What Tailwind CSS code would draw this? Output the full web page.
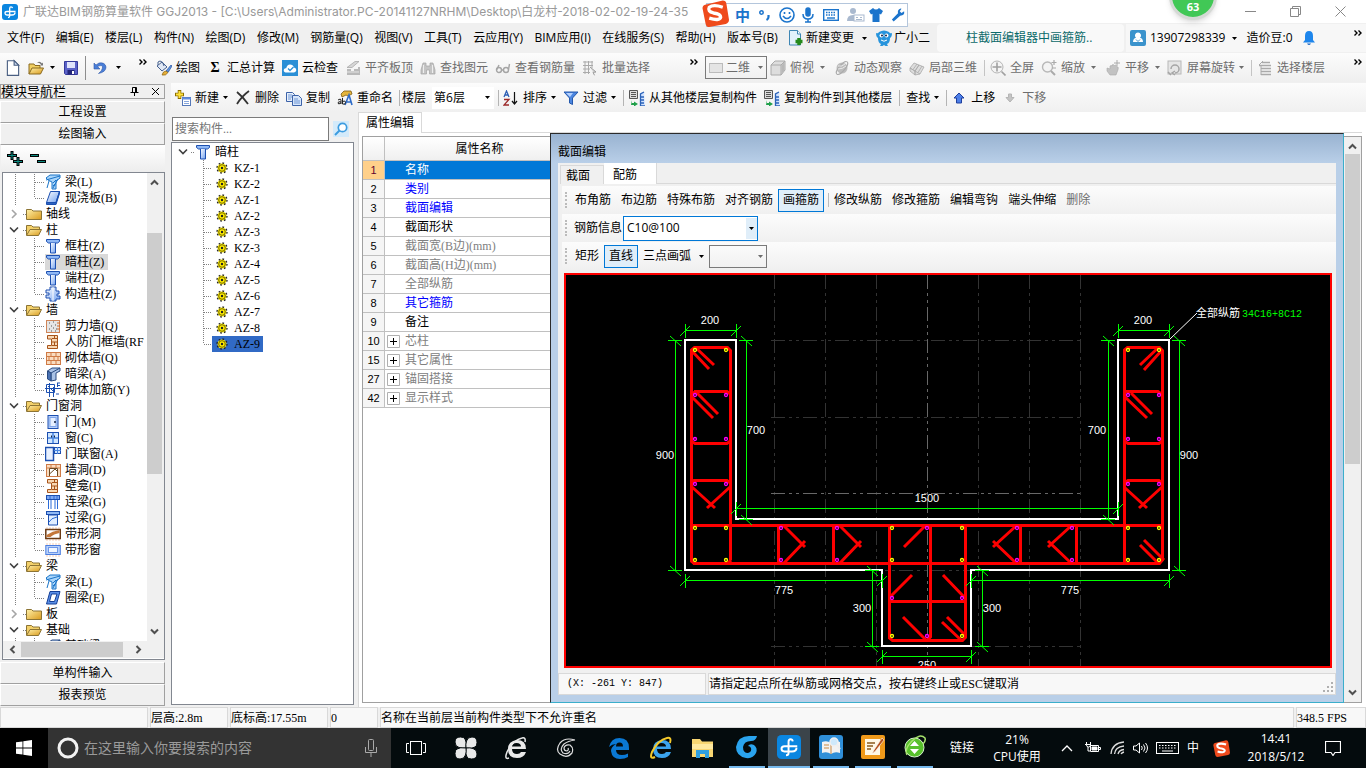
<!DOCTYPE html>
<html lang="zh-CN">
<head>
  <meta charset="UTF-8">
  <meta name="viewport" content="width=device-width, initial-scale=1.0">
  <title>广联达BIM钢筋算量软件 GGJ2013</title>
  <script src="https://cdn.jsdelivr.net/npm/@tailwindcss/browser@4"></script>
</head>
<body class="h-screen flex flex-col overflow-hidden bg-[#f0f0f0] text-black text-xs whitespace-nowrap font-['Open_Sans','Noto_Sans_CJK_SC',sans-serif]">

  <!-- icon sprite -->
  <svg width="0" height="0" class="absolute">
    <defs>
      <linearGradient id="gFolder" x1="0" y1="0" x2="1" y2="1"><stop offset="0" stop-color="#fff0a8"/><stop offset="1" stop-color="#d99a1c"/></linearGradient>
      <linearGradient id="gBlue" x1="0" y1="0" x2="1" y2="1"><stop offset="0" stop-color="#fff"/><stop offset="1" stop-color="#6fa0f0"/></linearGradient>
    </defs>
    <symbol id="caret" viewBox="0 0 7 4"><path d="M0 0h7L3.500 4z" fill="currentColor"/></symbol>
    <symbol id="more" viewBox="0 0 8 6"><path d="M.5.5L3 3 .5 5.500M4.500.5L7 3 4.500 5.500" fill="none" stroke="#000" stroke-width="1.400"/></symbol>
    <symbol id="logo" viewBox="0 0 16 16"><rect width="16" height="16" rx="3" fill="#0a86e0"/><path d="M10.500 4.200Q10.300 2.800 9 2.800T7.700 4.500V12q0 1.500-1.700 1.500M13.500 7.500H5Q3 7.500 3 9.200T5 11h5q3 0 3-2.500" fill="none" stroke="#fff" stroke-width="1.300"/></symbol>
    <symbol id="new" viewBox="0 0 16 16"><path d="M3 1.500h6l4 4v9H3z" fill="#fff" stroke="#4a5f82"/><path d="M9 1.500v4h4z" fill="#c9d8ee" stroke="#4a5f82"/></symbol>
    <symbol id="open" viewBox="0 0 16 16"><path d="M1 14V4h5l1 1.500h5V8" fill="#f0cf62" stroke="#8a6a20"/><path d="M1 14L4 8h11.500l-3 6z" fill="url(#gFolder)" stroke="#8a6a20"/><path d="M9 2.500q3-2 5 1l1-1v3h-3l1-1q-1.500-2-4-2" fill="#777"/></symbol>
    <symbol id="save" viewBox="0 0 16 16"><path d="M1.500 1.500h13v13h-12l-1-1z" fill="#5b62c8" stroke="#34399a"/><path d="M4 2h8v6H4z" fill="#dfe3fb"/><path d="M4.500 10h7v4.500h-7z" fill="#24277a"/><path d="M9 11h2v3H9z" fill="#fff"/></symbol>
    <symbol id="undo" viewBox="0 0 16 16"><path d="M2 3v6h6L5.500 6.500Q11 4 10.500 8 10 11 6.500 13.500 14 12 14 7 13 2 7 3L4 5z" fill="#4a7fd8" stroke="#2f58a8" stroke-width=".6"/></symbol>
    <symbol id="paint" viewBox="0 0 16 16"><path d="M1 6l5-4 5 5-5 4z" fill="#dfe7f4" stroke="#45608f"/><path d="M2 5Q1 1 4 1t4 5" fill="none" stroke="#45608f"/><path d="M15 5l-5 6 2 1.500 4-6.500z" fill="#5f94df" stroke="#234f9e" stroke-width=".7"/><path d="M10 11q-3 0-4 4 4 1 6-2.500z" fill="#e8b13a" stroke="#7b5713" stroke-width=".6"/></symbol>
    <symbol id="cloud" viewBox="0 0 16 16"><rect width="16" height="16" fill="#2a8fd6"/><path d="M3.500 12.500q-2.500-1-1.500-3.200 1-1.500 2.200-1Q5 4.500 8 4.500T12 7.500q2.500.5 2.300 2.800-.3 2-2.300 2.200z" fill="#fff"/><path d="M6 8.500l2 2 3.500-3.500" fill="none" stroke="#2a8fd6" stroke-width="1.300"/></symbol>
    <symbol id="align" viewBox="0 0 16 16"><path d="M2 7.500L10 1.500h4L7 7.500z" fill="#d6d6d6" stroke="#aaa" stroke-width=".8"/><path d="M2 9h4v2h3V9h4V7h2v8H2z" fill="#b9b9b9"/><path d="M2 12h12" stroke="#e6e6e6"/></symbol>
    <symbol id="binoc" viewBox="0 0 16 16"><path d="M3 3h3v3h4V3h3l2 7v4H9.500v-4h-3v4H1v-4z" fill="#c4c4c4" stroke="#a5a5a5" stroke-width=".7"/><path d="M3.500 5v8M12.500 5v8" stroke="#eee"/></symbol>
    <symbol id="glass" viewBox="0 0 16 16"><g fill="none" stroke="#a5a5a5" stroke-width="1.400"><circle cx="4" cy="10" r="2.500"/><circle cx="11" cy="10" r="2.500"/><path d="M1.500 10L4 5M6.500 10h2M13.500 9.500L14.500 4"/></g></symbol>
    <symbol id="batch" viewBox="0 0 16 16"><path d="M1 2h10M1 5.500h10M1 9h7M1 12.500h7M3 1v13M6.500 1v13M10 1v7" stroke="#aaa" fill="none"/><path d="M8 7l6 5-3 .3 1.500 3" fill="#ddd" stroke="#999"/></symbol>
    <symbol id="cube" viewBox="0 0 16 16"><path d="M1 5l4-4h10v9l-4 5H1z" fill="#ddd" stroke="#aaa"/><path d="M1 5h10v10M11 5l4-4" fill="none" stroke="#aaa"/><path d="M11.500 5.500l3-4v8.500l-3 4z" fill="#b8b8b8"/></symbol>
    <symbol id="orbit" viewBox="0 0 16 16"><circle cx="8" cy="8" r="5.500" fill="#bdbdbd"/><ellipse cx="8" cy="8" rx="8" ry="3" fill="none" stroke="#aaa" transform="rotate(-50 8 8)"/><path d="M4 6q4 1 7-2M4 9q5 0 8-3" stroke="#e8e8e8" fill="none"/></symbol>
    <symbol id="part3d" viewBox="0 0 16 16"><g fill="#ddd" stroke="#aaa" stroke-width=".8"><path d="M1 8l4-5 5 2-4 6zM6 11l4-6 5 2-4 7zM1 8v3l5 4v-4zM6 11v4l5-1M8 4L4 9.500M13 6l-4 6.500"/></g></symbol>
    <symbol id="full" viewBox="0 0 16 16"><circle cx="7" cy="7" r="6" fill="#f4f4f4" stroke="#b5b5b5"/><path d="M7 2.500v9M2.500 7h9M11.500 11.500l4 4" stroke="#a0a0a0" stroke-width="1.600"/></symbol>
    <symbol id="zoom" viewBox="0 0 16 16"><circle cx="6.500" cy="7" r="5" fill="#f4f4f4" stroke="#b8b8b8" stroke-width="1.400"/><path d="M10 11l4 4" stroke="#aaa" stroke-width="2"/><path d="M13 0v5M10.500 2.500h5M11 8h4" stroke="#aaa" stroke-width="1.200"/></symbol>
    <symbol id="hand" viewBox="0 0 16 16"><path d="M2 8l3 1V6q1-1 2 0V5q1-1 2 0l.5.5q1-1 2 .2l.5 1q2 0 1 3L11 15H5L2 11z" fill="#c2c2c2" stroke="#a8a8a8" stroke-width=".6"/><path d="M12 0v6M9 3h6" stroke="#aaa"/></symbol>
    <symbol id="rotate" viewBox="0 0 16 16"><rect x="1" y="1" width="13" height="13" fill="#e6e6e6" stroke="#b8b8b8"/><path d="M4 9a4 4 0 1 1 4 4M8 15l-3-2 3-2M1 12l3 3" fill="none" stroke="#a5a5a5" stroke-width="1.500"/></symbol>
    <symbol id="floors" viewBox="0 0 16 16"><path d="M5 2.500h8M2 5.500h12M4 8.500h10M4 11.500h10M4 14.500h10" stroke="#aaa" stroke-width="1.500"/><path d="M2 5l4-4M4 5v10" stroke="#aaa"/></symbol>
    <symbol id="add" viewBox="0 0 16 16"><path d="M4.500 0v9M0 4.500h9" stroke="#8a6d00" stroke-width="3.500"/><path d="M4.500 1v7M1 4.500h7" stroke="#ffe23c" stroke-width="2"/><rect x="7.500" y="7.500" width="8" height="8" fill="#fff" stroke="#5578b8"/><path d="M7 8.500h9" stroke="#5f8be0" stroke-width="2"/><path d="M9 11.500h5M9 13.500h5" stroke="#86a6dc"/></symbol>
    <symbol id="del" viewBox="0 0 16 16"><path d="M2 2q6 5 11 12M14 1Q7 6 2 14" fill="none" stroke="#333" stroke-width="1.800"/></symbol>
    <symbol id="copy" viewBox="0 0 16 16"><path d="M.5 2.500h6l2 2v7h-8z" fill="#e6effc" stroke="#3c62a8"/><path d="M6.500 5.500h6l3 3v7h-9z" fill="#d7e6fb" stroke="#3c62a8"/><path d="M2 5h4M2 7h4M2 9h3M8 9h4M8 11h6M8 13h6" stroke="#6f96d4"/></symbol>
    <symbol id="rename" viewBox="0 0 16 16"><path d="M4 4l3-3h7l1 3-4 2-2-1-4 2z" fill="#e4b53c" stroke="#7c5a12" stroke-width=".8"/><path d="M8 15l4-10 3 10M9.500 12h4.500" stroke="#2f6cc8" stroke-width="1.600" fill="none"/><path d="M1 10q3-2 3 0v4M4 12q-3-1-3 1t3 0M5.500 8v6q3 1 3-1.500t-3-1" fill="none" stroke="#222"/></symbol>
    <symbol id="sort" viewBox="0 0 16 16"><path d="M1 7l2.500-6L6 7M2 5h3" stroke="#2d5fb5" stroke-width="1.300" fill="none"/><path d="M1 9.500h5l-5 5.500h5" stroke="#9c2a2a" stroke-width="1.300" fill="none"/><path d="M11.500 2v12M9 11l2.500 3 2.500-3" stroke="#111" stroke-width="1.200" fill="none"/></symbol>
    <symbol id="filter" viewBox="0 0 16 16"><path d="M1 2h14L9.500 8v6.500L6.500 13V8z" fill="#4c86e0" stroke="#2458ac"/><path d="M3 3h7L7 7z" fill="#b5d2ff"/></symbol>
    <symbol id="flcopy" viewBox="0 0 16 16"><path d="M.5.500h8v8h-8z" fill="#ddd" stroke="#555"/><path d="M2 2.500h5M2 4.500h5M2 6.500h5" stroke="#555"/><path d="M15 2l-3.500 2v12H16M11.500 7H15M11.500 10H15M11.500 13H15" fill="#cfe2ff" stroke="#2b62b8" stroke-width="1.300"/><path d="M3 10v3h2v-1.500l4 2.500-4 2.500V15H2z" fill="#1fa04a"/></symbol>
    <symbol id="up" viewBox="0 0 16 16"><path d="M8 3l5 5h-2.500v5h-5V8H3z" fill="#4d7fe8" stroke="#1f3f9c"/></symbol>
    <symbol id="down" viewBox="0 0 16 16"><path d="M8 12l4-4.500H9.500V4h-3v3.500H4z" fill="#c4c4c4" stroke="#b5b5b5"/></symbol>
    <symbol id="change" viewBox="0 0 16 16"><path d="M1.500.5h8l3 3.500v11h-11z" fill="#e3f2fb" stroke="#3f86b4"/><path d="M9.500.5V4h3" fill="#fff" stroke="#3f86b4"/><path d="M11 8v7M7.500 11.500h7" stroke="#258a1c" stroke-width="3.500"/></symbol>
    <symbol id="owl" viewBox="0 0 16 16"><path d="M0 3q2 1 3-1 5-3 10 0 1 2 3 1 0 4-2 5 0 5-3 6l1 2H9.500L8 15l-1.500 1H4l1-2q-3-1-3-6Q0 7 0 3z" fill="#2794dc"/><circle cx="5.500" cy="5.500" r="2" fill="#fff"/><circle cx="10.500" cy="5.500" r="2" fill="#fff"/><circle cx="6" cy="5.500" r="1" fill="#124"/><circle cx="10" cy="5.500" r="1" fill="#124"/><path d="M5 10q3 2.500 6 0" stroke="#fff" fill="none"/></symbol>
    <symbol id="user" viewBox="0 0 16 16"><rect width="16" height="16" rx="2" fill="#3b93cc"/><path d="M8 2.500a3 3 0 0 1 2 5.300q3 .7 3 4.200H3q0-3.500 3-4.200A3 3 0 0 1 8 2.500z" fill="#fff"/><path d="M6 9.500l2 2 2-2" fill="none" stroke="#3b93cc"/></symbol>
    <symbol id="bell" viewBox="0 0 12 16"><path d="M6 1q4 0 4 5v4l2 2.500H0L2 10V6q0-5 4-5z" fill="#1e86ec"/><path d="M4 13.500h4q-2 3-4 0z" fill="#1e66c0"/></symbol>
    <symbol id="search" viewBox="0 0 16 16"><rect width="16" height="16" fill="#d3eafa"/><circle cx="9.500" cy="6.500" r="4.200" fill="#fff" stroke="#3c9ce0" stroke-width="1.700"/><path d="M6.500 9.500L2 14" stroke="#3c9ce0" stroke-width="2"/></symbol>
    <!-- tree icons -->
    <symbol id="fopen" viewBox="0 0 16 16"><path d="M.5 13V3.500h5L7 5h6.500v3" fill="#f3d06a" stroke="#8c7434"/><path d="M.5 13.500L4 7.500h11.500l-3 6z" fill="url(#gFolder)" stroke="#8c7434"/></symbol>
    <symbol id="fclosed" viewBox="0 0 16 16"><path d="M.5 13.500v-10h5L7 5h8.500v8.500z" fill="url(#gFolder)" stroke="#8c7434"/></symbol>
    <symbol id="col" viewBox="0 0 16 16"><path d="M1.500 1.500h13v2l-2 1.500h-9l-2-1.500z" fill="#8fb8f5" stroke="#1c4fb0"/><path d="M5.500 5v10h5V5" fill="url(#gBlue)" stroke="#1c4fb0"/></symbol>
    <symbol id="gzz" viewBox="0 0 16 16"><path d="M5 1h6v4h3v3h-2v2h3v3h-4v2H5v-3H1V9h3V7H1V4h4z" fill="url(#gBlue)" stroke="#1c4fb0"/><path d="M8 1v14" stroke="#fff"/></symbol>
    <symbol id="beam" viewBox="0 0 16 16"><path d="M1 4l4-3h10v3l-4 3v8H7V8L3 6z" fill="#a9d5fb" stroke="#1a74c8"/><path d="M1 6l14-4M4 7l-2 7M8 14l5-9M8 9l3-3M8 12l3-3" stroke="#1a74c8" fill="none"/></symbol>
    <symbol id="slab" viewBox="0 0 16 16"><path d="M5.500 1.500h9L11 12.500H1.500z" fill="url(#gBlue)" stroke="#1c4fb0"/><path d="M1.500 12.500v2H11l3.500-11v-2L11 12.500z" fill="#2b62c0" stroke="#1c4fb0"/></symbol>
    <symbol id="jlq" viewBox="0 0 16 16"><rect x="1.500" y="2.500" width="13" height="12" fill="#e5e5e5" stroke="#cf8558"/><path d="M4 5h1M8 4h1M6 8h1M10 7h1M4 11h1M8 10h1M11 11h1M6 13h1M10 13h1" stroke="#555"/><path d="M12 5h3M12 8h3M12 11h3" stroke="#d06a28"/></symbol>
    <symbol id="niche" viewBox="0 0 16 16"><path d="M2.500 1.500h10v13h-10v-3h4V5h-4z" fill="#f8d8b4" stroke="#a8541a"/><path d="M7 4.500h5M7 8h5M7 11.500h5M9.500 2v3M9.500 8v3" stroke="#a8541a"/></symbol>
    <symbol id="brick" viewBox="0 0 16 16"><rect x="1.500" y="2.500" width="14" height="12" fill="#f9dcc0" stroke="#cf7a45"/><path d="M1 6.500h15M1 10.500h15M6 2v4M11 2v4M4 6v4M9 6v4M13 6v4M6 10v4M11 10v4" stroke="#cf7a45"/></symbol>
    <symbol id="abeam" viewBox="0 0 16 16"><path d="M2.500 5L7 2h8v3l-4 2v7l-5 1V7z" fill="#a9c2e6" stroke="#2a4a80"/><path d="M2.500 5v8L6 15V7z" fill="#4a72b4" stroke="#2a4a80"/><path d="M6 7l9-5" stroke="#2a4a80"/></symbol>
    <symbol id="rebar" viewBox="0 0 16 16"><path d="M1.500 2.500h8v8h-8zM0 6.500h16M4.500 1v14M8.500 5v10M12 1h3M12 3.500h3M12.500 1v4M11 12h3" fill="none" stroke="#1c4fb0"/><path d="M3 4l5 5" stroke="#1c4fb0"/></symbol>
    <symbol id="door" viewBox="0 0 16 16"><rect x="3" y="1.500" width="10" height="13" fill="#b7d0fa" stroke="#1c4fb0"/><rect x="5" y="3.500" width="6" height="9" fill="#e7f0ff" stroke="#7fa5ea"/><path d="M9 8h2" stroke="#124" stroke-width="1.500"/></symbol>
    <symbol id="win" viewBox="0 0 16 16"><rect x="2.500" y="2.500" width="11" height="11" fill="#cfe6ff" stroke="#1c4fb0"/><path d="M8 3v10M3 8h10" stroke="#4a86e0" stroke-width="1.500"/><path d="M6.500 5.500v2M9.500 5.500v2" stroke="#124"/></symbol>
    <symbol id="dwin" viewBox="0 0 16 16"><rect x=".5" y="1.500" width="8" height="13" fill="#e7f0ff" stroke="#1c4fb0" stroke-width="1.500"/><rect x="9.500" y="1.500" width="6" height="6" fill="#cfe6ff" stroke="#1c4fb0"/><path d="M12.500 1v7M9 4.500h7" stroke="#4a86e0"/></symbol>
    <symbol id="whole" viewBox="0 0 16 16"><rect x="1.500" y="2.500" width="14" height="12" fill="#f9dcc0" stroke="#cf7a45"/><path d="M1 6h15M6 2v4M11 2v4" stroke="#cf7a45"/><path d="M4.500 14V6.500h8V14M4.500 12L10 7l2 2" fill="#fff" stroke="#6b4a24"/></symbol>
    <symbol id="lbeam" viewBox="0 0 16 16"><rect x="1.500" y="1.500" width="13" height="4" fill="#7fa9f2" stroke="#1c4fb0"/><path d="M3.500 6v9M6 6v9M10 6v9M12.500 6v9M5 2v3M9 2v3M12 2v3" stroke="#2b6bd8"/></symbol>
    <symbol id="gbeam" viewBox="0 0 16 16"><rect x="1.500" y="1.500" width="13" height="3" fill="#8fb8f5" stroke="#1c4fb0"/><path d="M3.500 5h9v10h-9z" fill="#e0edff" stroke="#1c4fb0"/><path d="M4 12q2-4 8-5" fill="none" stroke="#2b6bd8"/></symbol>
    <symbol id="sthole" viewBox="0 0 16 16"><path d="M2 1v14M5 1v14M8 1v14M11 1v14M14 1v14" stroke="#f7cdb5"/><rect x=".8" y="3.500" width="14.500" height="9" fill="#fff" stroke="#6b3b14" stroke-width="1.500"/><path d="M1.500 9q6-4 13-5v3q-6 1-9 4h-4z" fill="#c4773a"/></symbol>
    <symbol id="stwin" viewBox="0 0 16 16"><path d="M2 1v14M5 1v14M8 1v14M11 1v14M14 1v14" stroke="#f7cdb5"/><rect x=".8" y="3.500" width="14.500" height="9" fill="#b7d0fa" stroke="#4a7de0"/><rect x="3.500" y="5.500" width="9" height="5" fill="#f0f6ff" stroke="#6f97e8"/></symbol>
    <symbol id="ring" viewBox="0 0 16 16"><path d="M5 1.500h10L11.500 14H1.500z" fill="#5b8fe8" stroke="#143f96"/><path d="M6.500 4H12L9.500 11.500H4.500z" fill="#fff" stroke="#143f96"/></symbol>
    <symbol id="gear" viewBox="0 0 12 12"><circle cx="6" cy="6" r="4.500" fill="#ffec00"/><circle cx="6" cy="6" r="5" fill="none" stroke="#222" stroke-width="1.300" stroke-dasharray="1.700 2.200"/><circle cx="6" cy="6" r="3.300" fill="none" stroke="#3a3500" stroke-width=".7"/><circle cx="6" cy="6" r="1.200" fill="#222"/></symbol>
    <!-- taskbar -->
    <symbol id="sogou" viewBox="0 0 26 26"><path d="M3 4.500L20 .5q3 0 3.500 3L26 19q0 3-3 4L7 26q-3 0-3.500-3L.5 8q0-3 2.500-3.500z" fill="#ef4a1c"/><path d="M20 7q-9-3-13 0-2 4 4 5.500 7 1 7 4-1 4-11 1" fill="none" stroke="#fff" stroke-width="3.200"/></symbol>
    <symbol id="edge" viewBox="0 0 24 24"><path d="M2 11Q4 2 12.500 2 22 2 22 12v2H9q0 5 6 5 3 0 6-1.500V21q-3 2-8 2-8 0-9-8 0-4 5-7Q5 8 2 11zM9 10.500h7q0-4-3.500-4T9 10.500z" fill="currentColor"/></symbol>
  </svg>

  <!-- title bar -->
  <header class="relative flex items-center h-[23px] shrink-0 bg-white text-[#999]">
    <svg class="size-4 ml-0.5 mr-[5px]"><use href="#logo"/></svg>
    <h1 class="font-['Inter','Noto_Sans_CJK_SC',sans-serif]">广联达BIM钢筋算量软件 GGJ2013 - [C:\Users\Administrator.PC-20141127NRHM\Desktop\白龙村-2018-02-02-19-24-35</h1>
    <div class="ml-auto flex items-center pr-5 gap-[34px]">
      <button aria-label="最小化"><svg class="w-[11px] h-[11px]" fill="none" stroke="#888"><path d="M0 5.500h11"/></svg></button>
      <button aria-label="还原"><svg class="w-[11px] h-[11px]" fill="none" stroke="#888"><path d="M.5 2.500h8v8h-8zM2.500 2V.5h8v8H9"/></svg></button>
      <button aria-label="关闭"><svg class="w-[11px] h-[11px]" fill="none" stroke="#888"><path d="M.5.5l10 10M10.500.5l-10 10"/></svg></button>
    </div>

    <!-- floating speed ball -->
    <div class="absolute right-[149px] -top-[28px] size-12 rounded-full bg-[#41c856] border-3 border-[#d5d9d5] shadow-md flex items-end justify-center pb-1 text-white font-bold text-[11px] leading-3 z-10">63</div>

    <!-- input method bar -->
    <div class="absolute left-[706px] top-[3px] h-6 w-[202px] bg-white border border-[#b4c6dc] flex items-center z-10 text-[#1b74cc]">
      <svg class="size-[27px] -ml-[5px] mr-[6px] -mt-1"><use href="#sogou"/></svg>
      <span class="text-[15px] font-bold w-6">中</span>
      <svg class="w-3 h-3 mr-2" viewBox="0 0 12 12" fill="none" stroke="currentColor" stroke-width="1.500"><circle cx="2.500" cy="3.500" r="1.700"/><path d="M9.500 6v2q0 2-2 3" stroke-width="2.200"/></svg>
      <svg class="size-4 mr-[7px]" viewBox="0 0 16 16" fill="none" stroke="currentColor" stroke-width="1.600"><circle cx="8" cy="8" r="7"/><path d="M4 9q4 5 8 0"/><path d="M5.500 5v2M10.500 5v2"/></svg>
      <svg class="w-3 h-4 mr-[9px]" viewBox="0 0 12 16" fill="none" stroke="currentColor" stroke-width="1.500"><rect x="4" y="1" width="4" height="8" rx="2" fill="currentColor"/><path d="M1 7q0 5 5 5t5-5M6 12v3M3 15h6"/></svg>
      <svg class="size-4 mr-2" viewBox="0 0 16 16"><rect x=".7" y="2.700" width="14.600" height="10.600" fill="none" stroke="currentColor" stroke-width="1.400"/><path d="M3 5.500h10M3 8h10" stroke="currentColor" stroke-width="1.400" stroke-dasharray="1.500 1"/><path d="M4 11h8" stroke="currentColor" stroke-width="1.400"/></svg>
      <svg class="w-[18px] h-4 mr-1" viewBox="0 0 18 16"><circle cx="6" cy="4" r="3" fill="#a9b9cf"/><path d="M0 14q0-6 6-6t6 3v3z" fill="#a9b9cf"/><rect x="7" y="8" width="10" height="6" fill="#fff" stroke="#a9b9cf"/><path d="M9 10.500h2M13 10.500h2M9 12.500h6" stroke="#a9b9cf"/></svg>
      <svg class="w-[14px] h-4 mr-2" viewBox="0 0 14 16"><path d="M4 1q3 3 6 0l4 3-2 3.500-1.500-.8V15h-7V6.700L2 7.500 0 4z" fill="currentColor"/></svg>
      <svg class="w-[14px] h-4" viewBox="0 0 16 16"><path d="M1 13l7-7q-1-4 3-5.500l1 .3-2 3 2 2 3-2q1 5-4.500 5L3 15.500z" fill="currentColor"/></svg>
    </div>
  </header>

  <!-- menu -->
  <nav class="flex items-center h-[30px] shrink-0 pl-[7px]">
    <div class="flex items-center justify-between w-[771px] shrink-0">
      <button>文件(F)</button><button>编辑(E)</button><button>楼层(L)</button><button>构件(N)</button><button>绘图(D)</button><button>修改(M)</button><button>钢筋量(Q)</button><button>视图(V)</button><button>工具(T)</button><button>云应用(Y)</button><button>BIM应用(I)</button><button>在线服务(S)</button><button>帮助(H)</button><button>版本号(B)</button>
    </div>
    <button class="flex items-center gap-0.5 ml-[10px]"><svg class="size-4"><use href="#change"/></svg>新建变更<svg class="w-[5px] h-[3px] ml-1.5"><use href="#caret"/></svg></button>
    <button class="flex items-center gap-0.5 ml-[9px]"><svg class="size-4"><use href="#owl"/></svg>广小二</button>
    <div class="ml-auto w-[429px] h-7 flex">
      <a href="#" class="w-[187px] bg-[#f9f9f9] rounded-sm pl-[29px] flex items-center text-[#0b6a6a]">柱截面编辑器中画箍筋..</a>
      <div class="flex-1 ml-0.5 flex items-center pl-1 bg-[#f7f7f7] relative">
        <svg class="size-4 mr-1"><use href="#user"/></svg>13907298339
        <svg class="w-[5px] h-[3px] ml-[7px] mr-[9px]"><use href="#caret"/></svg>造价豆:0
        <svg class="w-3 h-4 ml-[10px]"><use href="#bell"/></svg>
        <svg class="w-2 h-1.5 absolute right-1 top-1.5"><use href="#more"/></svg>
      </div>
    </div>
  </nav>

  <!-- toolbar: file / view -->
  <div class="flex h-[29px] mb-px shrink-0 bg-linear-to-b from-[#fcfcfc] to-[#efefef] text-[#6d6d6d]">
    <div class="w-[153px] shrink-0 flex items-center pl-1 text-black">
      <button aria-label="新建" class="mr-1.5"><svg class="size-[18px]"><use href="#new"/></svg></button>
      <button aria-label="打开" class="mr-1.5"><svg class="size-4"><use href="#open"/></svg></button>
      <svg class="w-[5px] h-[3px] mr-2"><use href="#caret"/></svg>
      <button aria-label="保存" class="mr-1.5"><svg class="size-4"><use href="#save"/></svg></button>
      <span class="w-px h-6 bg-[#8d8d8d] mr-1.5"></span>
      <button aria-label="撤销" class="mr-2"><svg class="size-4"><use href="#undo"/></svg></button>
      <svg class="w-[5px] h-[3px]"><use href="#caret"/></svg>
      <svg class="w-2 h-1.5 ml-auto mr-1.5 -mt-3"><use href="#more"/></svg>
    </div>
    <div class="w-[549px] shrink-0 flex items-center pl-[3px] gap-[7px]">
      <button class="flex items-center gap-1 text-black"><svg class="size-4"><use href="#paint"/></svg>绘图</button>
      <button class="flex items-center gap-1 text-black"><b class="w-4 text-center text-sm font-['Liberation_Serif',serif]">Σ</b>汇总计算</button>
      <button class="flex items-center gap-1 text-black"><svg class="size-4"><use href="#cloud"/></svg>云检查</button>
      <button class="flex items-center gap-1"><svg class="size-4"><use href="#align"/></svg>平齐板顶</button>
      <button class="flex items-center gap-1"><svg class="size-4"><use href="#binoc"/></svg>查找图元</button>
      <button class="flex items-center gap-1"><svg class="size-4"><use href="#glass"/></svg>查看钢筋量</button>
      <button class="flex items-center gap-1"><svg class="size-4"><use href="#batch"/></svg>批量选择</button>
      <svg class="w-2 h-1.5 ml-auto mr-1 -mt-3"><use href="#more"/></svg>
    </div>
    <div class="flex-1 flex items-center pl-[3px] gap-[7px]">
      <div class="relative -mr-1 flex items-center">
        <select aria-label="视图模式" class="appearance-none w-[62px] h-[23px] border border-[#7a7a7a] pl-5 text-[#6d6d6d]"><option>二维</option></select>
        <span class="absolute left-1 w-[14px] h-[10px] border border-[#bbb] bg-[#e4e4e4]"></span>
        <svg class="w-[5px] h-[3px] absolute right-1 pointer-events-none"><use href="#caret"/></svg>
      </div>
      <button class="flex items-center gap-1"><svg class="size-4"><use href="#cube"/></svg>俯视<svg class="w-[5px] h-[3px] mx-0.5"><use href="#caret"/></svg></button>
      <button class="flex items-center gap-1"><svg class="size-4"><use href="#orbit"/></svg>动态观察</button>
      <button class="flex items-center gap-1"><svg class="size-4"><use href="#part3d"/></svg>局部三维</button>
      <span class="w-px h-4 bg-[#c4c4c4] -mr-0.5"></span>
      <button class="flex items-center gap-1"><svg class="size-4"><use href="#full"/></svg>全屏</button>
      <button class="flex items-center gap-1"><svg class="size-4"><use href="#zoom"/></svg>缩放<svg class="w-[5px] h-[3px] mx-0.5"><use href="#caret"/></svg></button>
      <button class="flex items-center gap-1"><svg class="size-4"><use href="#hand"/></svg>平移<svg class="w-[5px] h-[3px] ml-0.5"><use href="#caret"/></svg></button>
      <button class="flex items-center gap-1"><svg class="size-4"><use href="#rotate"/></svg>屏幕旋转<svg class="w-[5px] h-[3px]"><use href="#caret"/></svg></button>
      <span class="w-px h-4 bg-[#c4c4c4] -mr-0.5"></span>
      <button class="flex items-center gap-1"><svg class="size-4"><use href="#floors"/></svg>选择楼层</button>
      <svg class="w-2 h-1.5 ml-auto mr-1 -mt-3"><use href="#more"/></svg>
    </div>
  </div>

  <div class="flex flex-1 min-h-0">
    <!-- module navigation -->
    <aside class="w-[168px] shrink-0 flex flex-col pr-[3px] pb-px pt-px font-['Liberation_Serif','Noto_Sans_CJK_SC',serif]">
      <div class="h-[15px] flex items-center border border-[#a0a0a0] text-[13px] leading-[13px]">模块导航栏
        <svg class="size-[9px] ml-auto mr-3" fill="none" stroke="#000"><path d="M2.500 5V.5h4V5M5.500 1v4M.5 5.500h8M4.500 6v3"/></svg>
        <svg class="size-[9px] mr-1" fill="none" stroke="#000"><path d="M1 1l7 7M8 1L1 8"/></svg>
      </div>
      <button class="h-[22px] mt-0.5 border border-[#a0a0a0] border-t-white border-l-white">工程设置</button>
      <button class="h-[22px] border border-[#a0a0a0] border-t-white border-l-white">绘图输入</button>
      <div class="h-[27px] flex items-center gap-1 pl-1 ml-px bg-linear-to-b from-white to-[#ededed]">
        <svg class="w-5 h-4"><path d="M7 0v9M2 4.500h10M13 6v9M8 10.500h10" stroke="#000" stroke-width="3"/><path d="M7 1v7M3 4.500h8M13 7v7M9 10.500h8" stroke="#0c8a80"/></svg>
        <svg class="w-5 h-4"><path d="M1 4.500h9M8 10.500h9" stroke="#000" stroke-width="3"/><path d="M2 4.500h7M9 10.500h7" stroke="#0c8a80"/></svg>
      </div>
      <div class="flex-1 min-h-0 flex flex-col border border-[#828790] ml-0.5 bg-white">
        <div class="flex-1 min-h-0 flex">
          <ul id="navTree" class="flex-1 min-w-0 overflow-hidden pt-px"></ul>
          <div class="w-[17px] bg-[#f0f0f0] flex flex-col items-center py-1.5 pr-0.5">
            <svg class="w-[9px] h-[7px]" fill="none" stroke="#505050" stroke-width="2"><path d="M1 5.500l3.500-3.500L8 5.500"/></svg>
            <div class="w-[15px] mt-[47px] h-[241px] bg-[#cdcdcd]"></div>
            <svg class="w-[9px] h-[7px] mt-auto" fill="none" stroke="#505050" stroke-width="2"><path d="M1 1.500L4.500 5 8 1.500"/></svg>
          </div>
        </div>
        <div class="h-[17px] bg-[#f0f0f0] flex items-center pl-1.5 pr-[22px] mb-px">
          <svg class="w-[7px] h-[9px]" fill="none" stroke="#505050" stroke-width="2"><path d="M5.500 1L2 4.500 5.500 8"/></svg>
          <div class="w-[102px] h-[15px] ml-[5px] bg-[#cdcdcd]"></div>
          <svg class="w-[7px] h-[9px] ml-auto" fill="none" stroke="#505050" stroke-width="2"><path d="M1.500 1L5 4.500 1.500 8"/></svg>
        </div>
      </div>
      <button class="h-[22px] mt-0.5 border border-[#a0a0a0] border-t-white border-l-white">单构件输入</button>
      <button class="h-[22px] border border-[#a0a0a0] border-t-white border-l-white">报表预览</button>
    </aside>

    <div class="flex-1 min-w-0 flex flex-col">
      <!-- component toolbar -->
      <div class="h-[29px] shrink-0 ml-[3px] pl-1 flex items-center gap-[7px] bg-linear-to-b from-[#fcfcfc] to-[#f0f0f0]">
        <button class="flex items-center gap-1"><svg class="size-4"><use href="#add"/></svg>新建<svg class="w-[5px] h-[3px]"><use href="#caret"/></svg></button>
        <button class="flex items-center gap-1"><svg class="size-4"><use href="#del"/></svg>删除</button>
        <button class="flex items-center gap-1"><svg class="size-4"><use href="#copy"/></svg>复制</button>
        <button class="flex items-center gap-1"><svg class="size-4"><use href="#rename"/></svg>重命名</button>
        <span class="w-px h-4 bg-[#b4b4b4] -ml-px -mr-[5px]"></span>
        <label for="floor">楼层</label>
        <div class="relative flex items-center -ml-px">
          <select id="floor" class="appearance-none w-[62px] h-[22px] bg-white pl-0.5"><option>第6层</option></select>
          <svg class="w-[5px] h-[3px] absolute right-1 pointer-events-none"><use href="#caret"/></svg>
        </div>
        <span class="w-px h-4 bg-[#b4b4b4] -ml-[3px] -mr-[3px]"></span>
        <button class="flex items-center gap-1"><svg class="size-4"><use href="#sort"/></svg>排序<svg class="w-[5px] h-[3px]"><use href="#caret"/></svg></button>
        <button class="flex items-center gap-1"><svg class="size-4"><use href="#filter"/></svg>过滤<svg class="w-[5px] h-[3px]"><use href="#caret"/></svg></button>
        <span class="w-px h-4 bg-[#b4b4b4] -mr-0.5"></span>
        <button class="flex items-center gap-1"><svg class="size-4"><use href="#flcopy"/></svg>从其他楼层复制构件</button>
        <button class="flex items-center gap-1"><svg class="size-4"><use href="#flcopy"/></svg>复制构件到其他楼层</button>
        <span class="w-px h-4 bg-[#b4b4b4] -mr-px"></span>
        <button class="flex items-center gap-1">查找<svg class="w-[5px] h-[3px]"><use href="#caret"/></svg></button>
        <span class="w-px h-4 bg-[#b4b4b4] -mr-[3px]"></span>
        <button class="flex items-center gap-1"><svg class="size-4"><use href="#up"/></svg>上移</button>
        <button class="flex items-center gap-1 text-[#6d6d6d]"><svg class="size-4"><use href="#down"/></svg>下移</button>
      </div>

      <div class="flex-1 min-h-0 flex">
        <!-- component list -->
        <section class="w-[187px] shrink-0 ml-[3px] pr-1 pb-0.5 flex flex-col font-['Liberation_Serif','Noto_Sans_CJK_SC',serif]">
          <div class="flex items-center mt-[5px] mb-[1px] h-6">
            <input type="text" aria-label="搜索构件" placeholder="搜索构件..." class="w-[157px] h-6 ml-px border border-[#7a7a7a] bg-white px-0.5 placeholder:text-[#757575] outline-none">
            <button aria-label="搜索" class="ml-1"><svg class="size-4"><use href="#search"/></svg></button>
          </div>
          <ul id="compTree" class="flex-1 min-h-0 overflow-hidden bg-white border border-[#828790] pt-px"></ul>
        </section>

        <!-- property panel -->
        <main class="relative flex-1 min-w-0 flex flex-col bg-white border-l border-[#d9d9d9] pr-1 pb-1 font-['Liberation_Serif','Noto_Sans_CJK_SC',serif]">
          <div class="flex h-[21px] shrink-0">
            <button class="w-[63px] border-r border-t border-[#d9d9d9]">属性编辑</button>
            <div class="flex-1 border-b border-[#d9d9d9]"></div>
          </div>
          <div class="flex flex-1 min-h-0 mt-[3px] ml-[3px] border border-[#a0a0a0]">
            <div class="flex-1 overflow-hidden">
              <table class="w-full table-fixed border-separate border-spacing-0">
                <thead>
                  <tr class="h-6 bg-linear-to-b from-white to-[#efefef]">
                    <th class="w-[22px] p-0 border-r border-b border-[#c0c0c0]"></th>
                    <th class="w-[190px] p-0 border-r border-b border-[#c0c0c0] font-normal">属性名称</th>
                    <th class="p-0 border-b border-[#c0c0c0]"></th>
                  </tr>
                </thead>
                <tbody id="propRows"></tbody>
              </table>
            </div>
            <div class="w-[17px] bg-[#f0f0f0] flex flex-col items-center py-1.5">
              <svg class="w-[9px] h-[7px]" fill="none" stroke="#505050" stroke-width="2"><path d="M1 5.500l3.500-3.500L8 5.500"/></svg>
              <div class="w-[15px] mt-1 h-[310px] bg-[#cdcdcd]"></div>
              <svg class="w-[9px] h-[7px] mt-auto" fill="none" stroke="#505050" stroke-width="2"><path d="M1 1.500L4.500 5 8 1.500"/></svg>
            </div>
          </div>

          <!-- section editor window -->
          <div role="dialog" aria-labelledby="dlgTitle" class="absolute left-[191px] right-[22px] top-[21px] bottom-1 flex flex-col px-[7px] pb-[7px] border border-[#2b2b2b] border-b-[#3aaecb] border-r-[#3aaecb] bg-[#b9cfe8] font-['Open_Sans','Noto_Sans_CJK_SC',sans-serif]">
            <h2 id="dlgTitle" class="h-[29px] shrink-0 -mx-[7px] px-[7px] pt-1.5 flex items-center bg-linear-to-b from-[#99b3d1] to-[#b9cfe8]">截面编辑</h2>
            <div class="flex-1 min-h-0 flex flex-col bg-[#f0f0f0]">
              <div class="flex h-[21px] shrink-0 font-['Noto_Sans_CJK_SC',sans-serif]">
                <button class="w-11 mt-0.5 ml-0.5 border border-b-0 border-[#d9d9d9] pl-[5px] text-left">截面</button>
                <button class="w-[53px] bg-white border-r border-[#d9d9d9] pl-[9px] text-left">配筋</button>
                <div class="flex-1 border-b border-[#d9d9d9]"></div>
              </div>
              <div class="pt-0.5 pb-[3px] pl-1 flex flex-col">
                <div class="h-7 flex items-center bg-linear-to-b from-[#fcfcfc] to-[#f0f0f0]">
                  <span class="w-0 h-4 ml-[3px] mr-[3px] border-l-2 border-dotted border-[#bbb]"></span>
                  <button class="px-[5px]">布角筋</button>
                  <button class="px-[5px]">布边筋</button>
                  <button class="px-[5px]">特殊布筋</button>
                  <button class="px-[5px]">对齐钢筋</button>
                  <button class="px-1 h-[23px] border border-[#0078d7] bg-[#e0eef9]">画箍筋</button>
                  <span class="w-px h-[14px] bg-[#bbb] ml-1"></span>
                  <button class="px-[5px]">修改纵筋</button>
                  <button class="px-[5px]">修改箍筋</button>
                  <button class="px-[5px]">编辑弯钩</button>
                  <button class="px-[5px]">端头伸缩</button>
                  <button class="px-[5px] text-[#6d6d6d]">删除</button>
                </div>
                <div class="h-7 flex items-center bg-linear-to-b from-[#fcfcfc] to-[#f0f0f0]">
                  <span class="w-0 h-4 ml-[3px] mr-[7px] border-l-2 border-dotted border-[#bbb]"></span>
                  <label for="barInfo" class="mr-px">钢筋信息</label>
                  <div class="relative flex items-center">
                    <select id="barInfo" class="appearance-none w-[135px] h-[25px] bg-white border border-[#0078d7] pl-[3px]"><option>C10@100</option></select>
                    <span class="absolute right-px w-[11px] h-[21px] bg-[#e0eef9] flex items-center justify-center pointer-events-none"><svg class="w-[5px] h-[3px]"><use href="#caret"/></svg></span>
                  </div>
                </div>
                <div class="h-7 flex items-center bg-linear-to-b from-[#fcfcfc] to-[#f0f0f0]">
                  <span class="w-0 h-4 ml-[3px] mr-[3px] border-l-2 border-dotted border-[#bbb]"></span>
                  <button class="px-[5px]">矩形</button>
                  <button class="px-1 h-[23px] border border-[#0078d7] bg-[#e0eef9]">直线</button>
                  <button class="px-[5px] flex items-center">三点画弧<svg class="w-[5px] h-[3px] ml-2"><use href="#caret"/></svg></button>
                  <div class="relative flex items-center text-[#6d6d6d]">
                    <select aria-label="弧参数" class="appearance-none w-[58px] h-[23px] border border-[#7a7a7a]"><option></option></select>
                    <svg class="w-[5px] h-[3px] absolute right-1 pointer-events-none"><use href="#caret"/></svg>
                  </div>
                </div>
              </div>

              <!-- drawing -->
              <div class="flex-1 min-h-0 ml-1.5 mr-1 bg-black">
                <svg class="w-full h-full" viewBox="564 273 768 395">
                  <g id="axes" fill="none" stroke-dasharray="14 4 3 4 3 4"></g>
                  <g fill="none" stroke="#f00" stroke-width="3">
                    <path d="M691.500 562V350l3-2.500h33l3 3v210M1124.500 562V350l3-2.500h32l3 3V560l-3 3.500H694l-3-3.500M691 525.500h472"/>
                    <path d="M694 391.500h33l4 3M694 391.500l-3 3M691 441l4 2.500h32l4-3M691 483l3-2.500h33l4 3M691 561l4 2.500h32l4-3"/>
                    <path d="M1124 391.500h34l4 3M1124 441l4 2.500h31l4-3M1124 483l4-2.500h31l4 3"/>
                    <path d="M691 350l18 19M695 347l19 18M692 397l21 21M697 393l21 21M692 487l23 21M730 487l-23 21"/>
                    <path d="M1162 350l-18 20M1159 347l-19 18M1125 397l22 21M1131 393l21 21M1124 487l23 21M1162 487l-23 21M1144 540l20 20M1140 545l18 18"/>
                    <path d="M778.500 525v38M833.500 525v38M889.500 525v113l3 2.500h70l3-3V525M930.500 525v112l-3 3M1020.500 525v38M1076.500 525v38M889 601.500h76"/>
                    <path d="M784 526l21 21M784 563l21-22M840 526l21 21M840 563l21-22M1016 526l-23 21M1016 563l-23-22M1071 526l-23 21M1071 563l-23-22M925 526l-21 21"/>
                    <path d="M889 598l23-23M965 598l-22-23M926 640l-23-23M961 640l-19-18M966 636l-19-19"/>
                  </g>
                  <path d="M685 340h51v179h382V340h51v230H971v76h-89v-76H685z" fill="none" stroke="#fff" stroke-width="2"/>
                  <g id="dots" fill="#000" stroke-width="1.300"></g>
                  <g id="dims" fill="none" stroke="#0f0"></g>
                  <path d="M1170 339l27-26" stroke="#fff" fill="none"/>
                  <g id="dimTexts" fill="#fff" text-anchor="middle" class="text-[11px] font-['Liberation_Sans',sans-serif]"></g>
                  <text x="1196" y="317" fill="#fff" class="text-[11px] font-['Noto_Sans_CJK_SC',sans-serif]">全部纵筋</text>
                  <text x="1242" y="317" fill="#0f0" class="text-[10px] font-['Liberation_Mono',monospace]">34C16+8C12</text>
                  <rect x="565" y="274" width="766" height="393" fill="none" stroke="#f00" stroke-width="2"/>
                </svg>
              </div>

              <div class="h-[22px] mt-[5px] shrink-0 flex gap-0.5 font-['Liberation_Serif','Noto_Sans_CJK_SC',serif]">
                <div class="w-[148px] border border-[#d9d9d9] bg-[#f8f8f8] pl-2 flex items-center font-['Liberation_Mono',monospace] text-[10px]">(X: -261 Y: 847)</div>
                <div class="flex-1 border border-[#d9d9d9] bg-[#f8f8f8] flex items-center relative">请指定起点所在纵筋或网格交点，按右键终止或ESC键取消
                  <svg class="absolute right-0 bottom-0 size-3" fill="#b0b0b0"><path d="M8 0h2v2H8zM8 4h2v2H8zM4 4h2v2H4zM8 8h2v2H8zM4 8h2v2H4zM0 8h2v2H0z"/></svg>
                </div>
              </div>
            </div>
          </div>
        </main>
      </div>
    </div>
  </div>

  <!-- status bar -->
  <footer class="h-[21px] shrink-0 flex gap-0.5 font-['Liberation_Serif','Noto_Sans_CJK_SC',serif]">
    <div class="w-[148px] border border-[#d9d9d9] bg-[#f8f8f8]"></div>
    <div class="w-[78px] border border-[#d9d9d9] bg-[#f8f8f8] flex items-center">层高:2.8m</div>
    <div class="w-[98px] border border-[#d9d9d9] bg-[#f8f8f8] flex items-center">底标高:17.55m</div>
    <div class="w-[48px] border border-[#d9d9d9] bg-[#f8f8f8] flex items-center">0</div>
    <div class="flex-1 border border-[#d9d9d9] bg-[#f8f8f8] flex items-center">名称在当前层当前构件类型下不允许重名</div>
    <div class="w-[70px] border border-[#d9d9d9] bg-[#f8f8f8] flex items-center">348.5 FPS</div>
  </footer>

  <!-- taskbar -->
  <div class="h-10 shrink-0 flex bg-[#040b0d] text-white">
    <button aria-label="开始" class="w-12 bg-black flex items-center justify-center"><svg class="size-4" viewBox="0 0 16 16" fill="#fff"><path d="M0 2.300L6.500 1.400v6.200H0zM7.300 1.300L16 0v7.600H7.300zM0 8.400h6.500v6.200L0 13.700zM7.300 8.400H16V16l-8.700-1.300z"/></svg></button>
    <div class="w-[343px] bg-[#333] flex items-center pl-2 pr-3">
      <svg class="size-6 mr-1" viewBox="0 0 24 24"><circle cx="12" cy="12" r="9" fill="none" stroke="#f2f2f2" stroke-width="3"/></svg>
      <input type="text" aria-label="搜索" placeholder="在这里输入你要搜索的内容" class="flex-1 text-sm outline-none placeholder:text-[#9a9a9a]">
      <svg class="w-4 h-5" viewBox="0 0 16 20" fill="none" stroke="#aaa"><rect x="5.500" y="1.500" width="5" height="11" rx="1"/><path d="M2.500 9v5.500h11V9M8 15v4"/></svg>
    </div>
    <button aria-label="任务视图" class="w-[50px] flex items-center justify-center"><svg class="w-5 h-4" viewBox="0 0 20 16" fill="none" stroke="#fff"><rect x="4.500" y="1.500" width="11" height="13"/><path d="M3 3.500H.5v9H3M17 3.500h2.500v9H17"/></svg></button>
    <button aria-label="风扇" class="w-[50px] flex items-center justify-center"><svg class="size-[22px]" viewBox="0 0 22 22"><g fill="#e9e9e9" stroke="#040b0d"><path id="blade" d="M11 11q1-6-1-9Q9 0 5.500 0 0 0 0 5q0 4.500 4 5.500 3 1 7 .5z"/><use href="#blade" transform="rotate(90 11 11)"/><use href="#blade" transform="rotate(180 11 11)"/><use href="#blade" transform="rotate(270 11 11)"/></g></svg></button>
    <button aria-label="浏览器" class="w-[50px] flex items-center justify-center text-[#e9e9e9]"><svg class="size-6" viewBox="0 0 24 24"><path d="M22 13H8q0 5 5 5 3 0 4-2h5q-2 6-9 6-9 0-9-9 0-8 9-9 9 0 9 9zM8 10.500h9Q17 7 12.500 7T8 10.500z" fill="currentColor"/><path d="M5 22Q0 24 3 16 9 4 18 2q4-1 3 4" fill="none" stroke="currentColor" stroke-width="1.500"/></svg></button>
    <button aria-label="旋风" class="w-[50px] flex items-center justify-center"><svg class="size-5" viewBox="0 0 20 20" fill="none" stroke="#ddd" stroke-width="1.200"><path d="M19 2Q9-1 4 5q-5 7 0 11 7 5 12-1 2-5-2-8-5-1-6 3 0 3 3 3 2-1 1-3M19 2q-7 1-11 4-5 5-1 9 5 2 7-2"/></svg></button>
    <button aria-label="Edge" class="w-[42px] ml-[7px] flex items-center justify-center text-[#0a78d4]"><svg class="size-6"><use href="#edge"/></svg></button>
    <button aria-label="Internet Explorer" class="w-[42px] flex items-center justify-center"><svg class="size-6" viewBox="0 0 24 24"><path d="M22 13H8q0 5 5 5 3 0 4-2h5q-2 6-9 6-9 0-9-9 0-8 9-9 9 0 9 9zM8 10.500h9Q17 7 12.500 7T8 10.500z" fill="#3ba4ee"/><path d="M6 21q-6 3-3-5Q9 4 18 2q5-1 3 5" fill="none" stroke="#f4c92c" stroke-width="2"/></svg></button>
    <button aria-label="文件资源管理器" class="w-[42px] flex items-center justify-center"><svg class="size-6" viewBox="0 0 24 24"><path d="M1 3h8l2 2.500h11V21H1z" fill="#f8d672"/><path d="M1 8h21v5H1z" fill="#ffe9a0"/><path d="M5 22v-8h13v8h-4v-4H9v4z" fill="#2f9fe0"/></svg></button>
    <button aria-label="广联达" class="w-9 ml-[5px] mr-[3px] flex items-center justify-center border-b-2 border-[#76b9ed]"><svg class="size-6" viewBox="0 0 24 24"><path d="M22 1q-1 5-6 5-7 0-8 6 0 6 5 6 4-1 3-5-1-2-3-2 2-3 6-1 4 3 2 8-3 6-10 5Q1 21 1 12 3 1 14 1z" fill="#2aa4ee"/></svg></button>
    <button aria-label="GGJ2013" class="w-[42px] flex items-center justify-center bg-[#3b444a] border-b-2 border-[#76b9ed]"><svg class="size-6"><use href="#logo"/></svg></button>
    <button aria-label="图集" class="w-9 mx-[3px] flex items-center justify-center border-b-2 border-[#76b9ed]"><svg class="size-6" viewBox="0 0 24 24"><rect width="24" height="24" rx="3" fill="#2f8fd8"/><path d="M3 7q5-2 9 1 4-3 9-1v11q-5-2-9 1-4-3-9-1z" fill="#f2f2f2"/><path d="M12 8v11M5 10h5M5 13h5" stroke="#c98a44"/><circle cx="15" cy="7" r="4" fill="#cfe9fb" stroke="#f0f0f0" stroke-width="1.500"/><path d="M18 10l3 4" stroke="#eee" stroke-width="2"/></svg></button>
    <button aria-label="记事" class="w-9 mx-[3px] flex items-center justify-center border-b-2 border-[#76b9ed]"><svg class="size-6" viewBox="0 0 24 24"><rect width="24" height="24" rx="2" fill="#f09a1a"/><rect x="4" y="4" width="15" height="16" fill="#fff8e6"/><path d="M6 8h8M6 11h6M6 14h4" stroke="#8a5a1c" stroke-width="1.500"/><path d="M21 3l-8 12-2 4 3.500-3L23 5z" fill="#b5501a" stroke="#fff" stroke-width=".6"/></svg></button>
    <button aria-label="360浏览器" class="w-9 mx-[3px] flex items-center justify-center border-b-2 border-[#76b9ed]"><svg class="size-6" viewBox="0 0 24 24"><circle cx="11.500" cy="12.500" r="9.500" fill="#58c02c" stroke="#d9f2cf"/><path d="M7 11l4.500-5 4.500 5zM7 14h9l-4.500 5z" fill="#fff"/><path d="M4 20Q1 14 9 6t13-3q1 3-2 6" fill="none" stroke="#a6e36c" stroke-width="1.500"/></svg></button>
    <div class="ml-auto flex items-center pr-[25px]">
      <span class="mr-[19px]">链接</span>
      <div class="w-12 text-center leading-[17px] mr-5">21%<br>CPU使用</div>
      <svg class="w-3 h-2 mr-3" fill="none" stroke="#fff" stroke-width="1.300"><path d="M1 7l5-5 5 5"/></svg>
      <svg class="w-4 h-4 mr-[9px]" viewBox="0 0 16 16" fill="none" stroke="#fff"><path d="M5.500 5.500h8v6h-8zM14 7.500h1.500v2H14M1.500 2v3q0 2 2 2t2-2V2M0 4.500h6M3 7v4h2"/><path d="M7 7h5v3H7z" fill="#fff"/></svg>
      <svg class="w-4 h-4 mr-1.5" viewBox="0 0 16 16" fill="none" stroke="#ddd" stroke-width="1.300"><path d="M1 14Q2 3 14 2M4.500 14Q5 7 14 6M8 14q1-4 6-4.500M11 14q1-1.500 3-2"/></svg>
      <svg class="w-4 h-4 mr-2" viewBox="0 0 16 16" fill="none" stroke="#fff"><path d="M1.500 6v4h2.500l3.500 3V3L4 6zM9.500 6q1.500 2 0 4M11.500 4.500q3 3.500 0 7M13.500 3q4 5 0 10"/></svg>
      <svg class="w-[23px] h-4 mr-2" viewBox="0 0 23 16" fill="none" stroke="#fff"><rect x=".5" y="2.500" width="22" height="11"/><path d="M3 5.500h17M3 8h17" stroke-dasharray="1.500 1.500"/><path d="M6 11h11"/></svg>
      <span class="mr-[14px]">中</span>
      <svg class="size-[17px] mr-4"><use href="#sogou" width="17" height="17"/></svg>
      <div class="w-[60px] text-center leading-[18px] mr-[19px]">14:41<br>2018/5/12</div>
      <svg class="size-4" viewBox="0 0 16 16" fill="none" stroke="#fff" stroke-width="1.200"><path d="M.5 1.500h15v11H10L8 15.500l-2-3H.5z"/></svg>
    </div>
  </div>

  <script>
    // [label, icon, kind]  kind: 'open' | 'closed' | 'mid' | 'last'
    const nav = [
      ['梁(L)', 'beam', 'mid'], ['现浇板(B)', 'slab', 'last'],
      ['轴线', 'fclosed', 'closed'],
      ['柱', 'fopen', 'open'],
      ['框柱(Z)', 'col', 'mid'], ['暗柱(Z)', 'col', 'mid', true], ['端柱(Z)', 'col', 'mid'], ['构造柱(Z)', 'gzz', 'last'],
      ['墙', 'fopen', 'open'],
      ['剪力墙(Q)', 'jlq', 'mid'], ['人防门框墙(RF', 'niche', 'mid'], ['砌体墙(Q)', 'brick', 'mid'], ['暗梁(A)', 'abeam', 'mid'], ['砌体加筋(Y)', 'rebar', 'last'],
      ['门窗洞', 'fopen', 'open'],
      ['门(M)', 'door', 'mid'], ['窗(C)', 'win', 'mid'], ['门联窗(A)', 'dwin', 'mid'], ['墙洞(D)', 'whole', 'mid'], ['壁龛(I)', 'niche', 'mid'], ['连梁(G)', 'lbeam', 'mid'], ['过梁(G)', 'gbeam', 'mid'], ['带形洞', 'sthole', 'mid'], ['带形窗', 'stwin', 'last'],
      ['梁', 'fopen', 'open'],
      ['梁(L)', 'beam', 'mid'], ['圈梁(E)', 'ring', 'last'],
      ['板', 'fclosed', 'closed'],
      ['基础', 'fopen', 'open'],
      ['基础梁(F)', 'abeam', 'mid'],
    ];
    const dotted = 'fill="none" stroke="#808080" stroke-dasharray="1 1"';
    const chevron = {
      open: '<path d="M7 5.500l4 4 4-4" fill="none" stroke="#404040" stroke-width="1.600"/>',
      closed: '<path d="M9 4l4 4-4 4" fill="none" stroke="#a6a6a6" stroke-width="1.600"/>',
    };
    document.getElementById('navTree').innerHTML = nav.map(([label, icon, kind, selected]) => {
      const icn = `<svg class="size-4 shrink-0"><use href="#${icon}"/></svg>`;
      if (chevron[kind]) {
        return `<li class="flex items-center h-4"><svg class="w-[23px] h-4 shrink-0">${chevron[kind]}<path d="M20 8.500h3" ${dotted}/></svg>${icn}<span class="ml-1">${label}</span></li>`;
      }
      const end = kind === 'last' ? 8 : 16;
      const bg = selected ? 'bg-[#d9d9d9] flex items-center pr-1' : 'flex items-center';
      return `<li class="flex items-center h-4"><svg class="w-[42px] h-4 shrink-0"><path d="M12.500 0v16M31.500 0v${end}M32 8.500h10" ${dotted}/></svg><span class="${bg}">${icn}<span class="ml-1">${label}</span></span></li>`;
    }).join('');

    const comps = ['KZ-1', 'KZ-2', 'AZ-1', 'AZ-2', 'AZ-3', 'KZ-3', 'AZ-4', 'AZ-5', 'AZ-6', 'AZ-7', 'AZ-8', 'AZ-9'];
    document.getElementById('compTree').innerHTML =
      `<li class="flex items-center h-4"><svg class="w-[23px] h-4"><path d="M7 5.500l4 4 4-4" fill="none" stroke="#404040" stroke-width="1.600"/><path d="M19 8.500h4" ${dotted}/></svg><svg class="size-4"><use href="#col"/></svg><span class="ml-1">暗柱</span></li>` +
      comps.map((name, i) => {
        const last = i === comps.length - 1;
        const bg = last ? 'flex items-center h-4 pl-1 pr-[3px] bg-[#316ac5]' : 'flex items-center h-4 pl-1';
        return `<li class="flex items-center h-4"><svg class="w-[40px] h-4"><path d="M31.500 0v${last ? 8 : 16}M32 8.500h8" ${dotted}/></svg><span class="${bg}"><svg class="size-3 mr-[6px]"><use href="#gear"/></svg>${name}</span></li>`;
      }).join('');

    // [no, name, tone]
    const props = [
      [1, '名称', 'sel'], [2, '类别', 'blue'], [3, '截面编辑', 'blue'], [4, '截面形状', 'black'],
      [5, '截面宽(B边)(mm)', 'gray'], [6, '截面高(H边)(mm)', 'gray'], [7, '全部纵筋', 'gray'], [8, '其它箍筋', 'blue'],
      [9, '备注', 'black'], [10, '芯柱', 'group'], [15, '其它属性', 'group'], [27, '锚固搭接', 'group'], [42, '显示样式', 'group'],
    ];
    const tones = { sel: 'bg-[#0078d7] text-white', blue: 'text-[#0000ff]', black: 'text-black', gray: 'text-[#808080]', group: 'text-[#808080]' };
    document.getElementById('propRows').innerHTML = props.map(([no, name, tone]) => {
      const num = tone === 'sel' ? 'bg-[#ffd08a] text-[#600030]' : 'bg-[#f5f5f5]';
      const plus = tone === 'group'
        ? '<svg class="size-[13px] ml-0.5 mr-[5px]"><path d="M.5.5h12v12H.5z" fill="#fff" stroke="#b0b0b0"/><path d="M3 6.500h7M6.500 3v7" stroke="#000"/></svg>'
        : '<span class="w-5"></span>';
      return `<tr class="h-[19px]"><td class="p-0 border-r border-b border-[#c0c0c0] text-center text-[11px] font-['Liberation_Sans',sans-serif] ${num}">${no}</td><td class="p-0 border-r border-b border-[#c0c0c0] ${tones[tone]}"><div class="flex items-center h-[18px]">${plus}${name}</div></td><td class="p-0 border-b border-[#c0c0c0]"></td></tr>`;
    }).join('');

    // grid axes
    const axes = [774, 825, 876, 927, 978, 1029, 1080].map(x => `<path d="M${x + .5} 275v391" stroke="${x === 927 ? '#686868' : '#333'}"/>`);
    [340, 417, 493, 570, 646].forEach(y => axes.push(`<path d="M771 ${y + .5}h313" stroke="${y === 493 ? '#686868' : '#333'}"/>`));
    document.getElementById('axes').innerHTML = axes.join('');

    // dimension lines, horizontal [y, x1, x2] and vertical [x, y1, y2]
    const hDims = [[330, 685, 736], [330, 1118, 1169], [508, 736, 1118], [580, 685, 882], [580, 971, 1169], [656, 882, 971]];
    const vDims = [[675, 340, 570], [746, 340, 519], [1108, 340, 519], [1179, 340, 570], [872, 570, 646], [982, 570, 646]];
    const tickH = (x, y) => `M${x + .5} ${y - 6}v14M${x - 5} ${y + 6}l10-10`;
    const tickV = (x, y) => `M${x - 7} ${y + .5}h14M${x - 5} ${y - 4}l11 10`;
    document.getElementById('dims').innerHTML =
      hDims.map(([y, a, b]) => `<path d="M${a} ${y + .5}H${b}${tickH(a, y)}${tickH(b, y)}"/>`).join('') +
      vDims.map(([x, a, b]) => `<path d="M${x + .5} ${a}V${b}${tickV(x, a)}${tickV(x, b)}"/>`).join('');

    const labels = [['200', 710, 324], ['200', 1143, 324], ['700', 756, 434], ['700', 1097, 434], ['900', 665, 459], ['900', 1189, 459],
      ['1500', 927, 502], ['775', 784, 594], ['775', 1070, 594], ['300', 862, 612], ['300', 992, 612], ['250', 927, 669]];
    document.getElementById('dimTexts').innerHTML = labels.map(([t, x, y]) => `<text x="${x}" y="${y}">${t}</text>`).join('');

    // longitudinal bars
    const yellow = [], magenta = [];
    [695, 726, 1128, 1159].forEach(x => {
      [350, 528, 560].forEach(y => yellow.push([x, y]));
      [395, 439, 484].forEach(y => magenta.push([x, y]));
    });
    [781, 837, 1017, 1072].forEach(x => magenta.push([x, 528], [x, 560]));
    [892, 962].forEach(x => { yellow.push([x, 528], [x, 560], [x, 636]); magenta.push([x, 598]); });
    magenta.push([927, 528], [927, 636]);
    const ring = color => ([x, y]) => `<circle cx="${x}" cy="${y}" r="1.500" stroke="${color}"/>`;
    document.getElementById('dots').innerHTML = yellow.map(ring('#ff0')).join('') + magenta.map(ring('#f0f')).join('');
  </script>
</body>
</html>
